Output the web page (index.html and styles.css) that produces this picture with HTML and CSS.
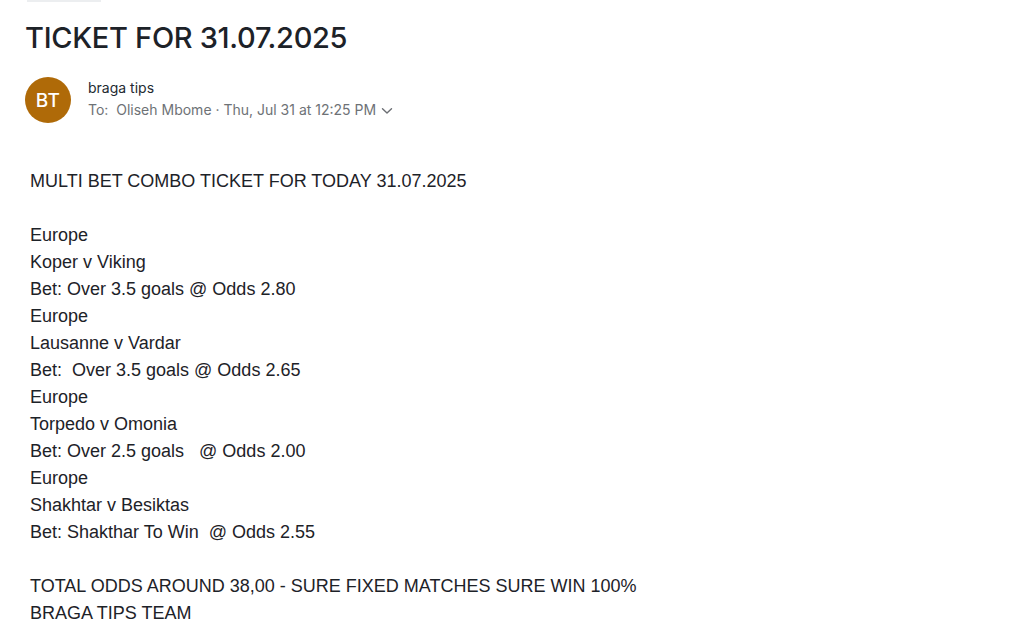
FILE: index.html
```html
<!DOCTYPE html>
<html>
<head>
<meta charset="utf-8">
<link rel="stylesheet" href="styles.css">
</head>
<body>
<div class="page">
  <div class="topbar"></div>
  <h1 class="subject">TICKET FOR 31.07.2025</h1>
  <div class="header">
    <div class="avatar">BT</div>
    <div class="meta">
      <div class="sender">braga tips</div>
      <div class="recip"><span>To:&nbsp; Oliseh Mbome · Thu, Jul 31 at 12:25 PM</span><svg class="chev" width="12" height="8" viewBox="0 0 12 8"><path d="M1.5 1.8 L6 6 L10.5 1.8" fill="none" stroke="#6b6e73" stroke-width="1.4" stroke-linecap="round" stroke-linejoin="round"/></svg></div>
    </div>
  </div>
  <div class="body">
    <div>MULTI BET COMBO TICKET FOR TODAY 31.07.2025</div>
    <div><br></div>
    <div>Europe</div>
    <div>Koper v Viking</div>
    <div>Bet: Over 3.5 goals @ Odds 2.80</div>
    <div>Europe</div>
    <div>Lausanne v Vardar</div>
    <div>Bet:&nbsp; Over 3.5 goals @ Odds 2.65</div>
    <div>Europe</div>
    <div>Torpedo v Omonia</div>
    <div>Bet: Over 2.5 goals&nbsp;&nbsp; @ Odds 2.00</div>
    <div>Europe</div>
    <div>Shakhtar v Besiktas</div>
    <div>Bet: Shakthar To Win&nbsp; @ Odds 2.55</div>
    <div><br></div>
    <div>TOTAL ODDS AROUND 38,00 - SURE FIXED MATCHES SURE WIN 100%</div>
    <div>BRAGA TIPS TEAM</div>
  </div>
</div>
</body>
</html>
```
FILE: styles.css
```css
html, body {
  margin: 0;
  padding: 0;
  background: #fff;
}
.page {
  padding: 0 0 0 25px;
  font-family: Inter, "Noto Sans", sans-serif;
  color: #232a31;
}
.topbar {
  width: 74px;
  height: 2px;
  margin-left: 2px;
  background: #eceef0;
}
.subject {
  margin: 17px 0 0 0;
  font-size: 29px;
  font-weight: 500;
  line-height: 38px;
  letter-spacing: -0.3px;
  color: #1d2228;
}
.header {
  display: flex;
  align-items: flex-start;
  margin-top: 20px;
}
.avatar {
  width: 46px;
  height: 46px;
  border-radius: 50%;
  background: #af6a08;
  color: #fff;
  display: flex;
  align-items: center;
  justify-content: center;
  font-size: 19px;
  font-weight: 500;
  letter-spacing: 0.3px;
}
.meta {
  margin-left: 17px;
  margin-top: 1px;
}
.sender {
  font-size: 14px;
  line-height: 20px;
  color: #232a31;
}
.recip {
  font-size: 14px;
  line-height: 20px;
  margin-top: 2px;
  color: #6e7276;
  display: flex;
  align-items: center;
}
.chev {
  margin-left: 5px;
  margin-top: 2px;
}
.body {
  margin-top: 45px;
  padding-left: 5px;
  font-family: "Liberation Sans", Arial, sans-serif;
  font-size: 18px;
  line-height: 27px;
  color: #1d2228;
}
```
